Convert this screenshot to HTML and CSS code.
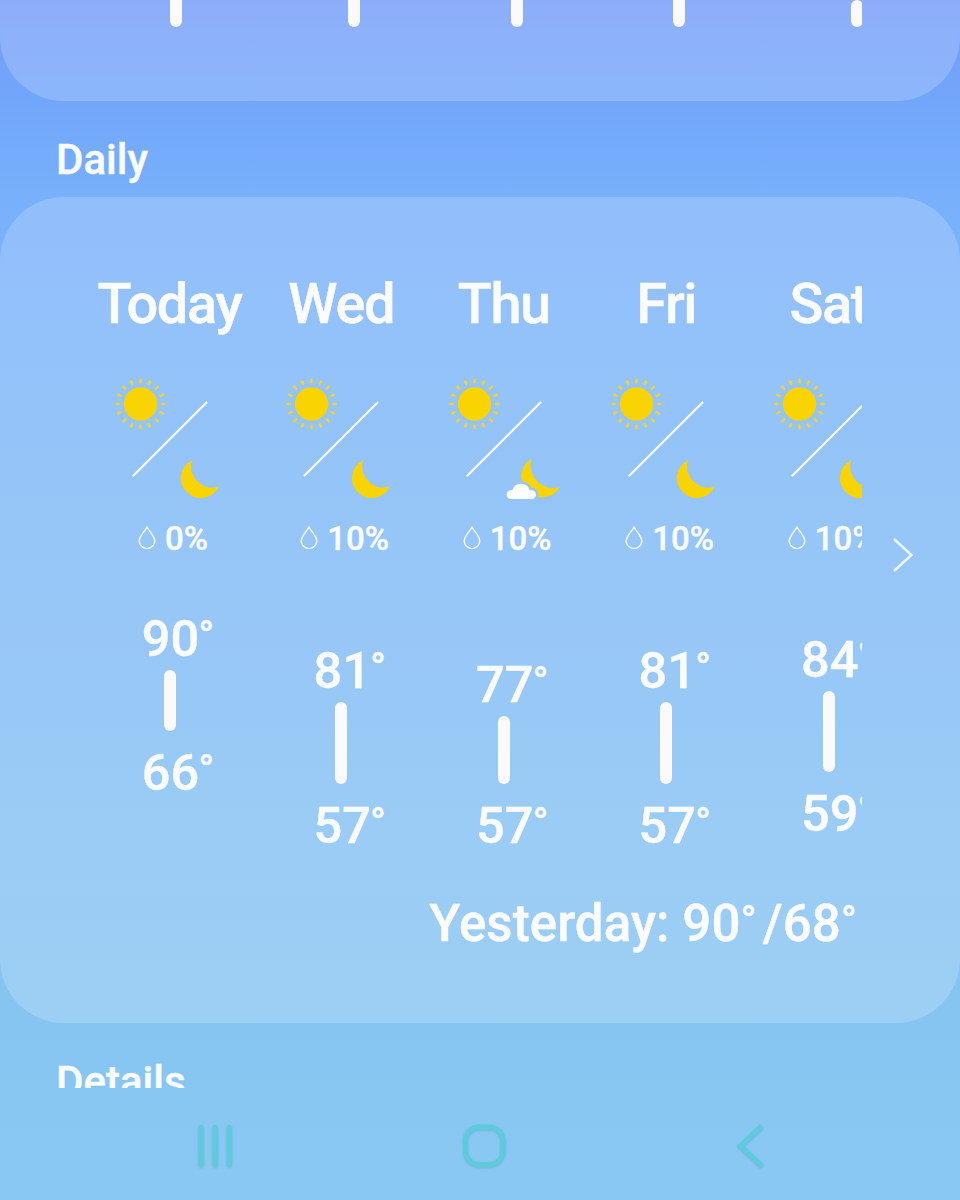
FILE: index.html
```html
<!DOCTYPE html>
<html lang="en">

<head>
  <meta charset="UTF-8" />
  <title>Weather</title>
  <link rel="stylesheet" href="styles.css">
</head>

<body>
  <!-- Shared icons -->
  <svg class="sprite" aria-hidden="true">
    <symbol id="sun-slash" viewBox="0 0 120 130">
      <circle cx="30.5" cy="32" r="16.7" fill="#fad400" />
      <g stroke="#f0d22e" stroke-width="2.7" stroke-linecap="round">
        <g id="rays">
          <path id="ray" d="M30.5 10.2V7.9" />
          <use href="#ray" transform="rotate(22.5 30.5 32)" />
          <use href="#ray" transform="rotate(45 30.5 32)" />
          <use href="#ray" transform="rotate(67.5 30.5 32)" />
        </g>
        <use href="#rays" transform="rotate(90 30.5 32)" />
        <use href="#rays" transform="rotate(180 30.5 32)" />
        <use href="#rays" transform="rotate(270 30.5 32)" />
      </g>
      <path d="M23.5 103.5L96.5 30.5" stroke="#fafcff" stroke-width="2.2" stroke-linecap="round" />
    </symbol>
    <symbol id="clear-night" viewBox="0 0 120 130">
      <use href="#sun-slash" width="120" height="130" />
      <path d="M82 88.300A19.900 19.900 0 1 0 108.800 114.600A21.400 21.400 0 0 1 82 88.300Z" fill="#fad400" />
    </symbol>
    <symbol id="cloudy-night" viewBox="0 0 120 130">
      <mask id="cloud-cut" maskUnits="userSpaceOnUse" x="0" y="0" width="120" height="130">
        <rect width="120" height="130" fill="#fff" />
        <use href="#cloud-shape" fill="#000" stroke="#000" stroke-width="5" />
      </mask>
      <use href="#sun-slash" width="120" height="130" />
      <path d="M87.4 86.8A20.8 20.8 0 1 0 116 115.2A23 23 0 0 1 87.4 86.8Z" fill="#fad400" mask="url(#cloud-cut)" />
      <use href="#cloud-shape" fill="#fff" />
    </symbol>
    <symbol id="drop" viewBox="0 0 18 24">
      <path d="M9 1.2C7 5 1.2 10.3 1.2 15A7.8 7.6 0 0 0 16.8 15C16.8 10.3 11 5 9 1.2Z" fill="none" stroke="#fafcff" stroke-width="1.4" />
    </symbol>
    <defs>
      <path id="cloud-shape" d="M67 127A4.4 4.4 0 0 1 67 118.2H68.4A9 9 0 0 1 85.6 118.2H87.6A4.4 4.4 0 0 1 87.6 127Z" />
    </defs>
  </svg>

  <main class="content">
    <!-- Hourly card -->
    <section class="card hourly">
      <div class="hours">
        <span class="bar"></span>
        <span class="bar"></span>
        <span class="bar"></span>
        <span class="bar"></span>
        <span class="bar"></span>
      </div>
    </section>

    <h2 class="section-title">Daily</h2>

    <!-- Daily card -->
    <section class="card daily">
      <div class="days">
        <div class="day today">
          <div class="day-name">Today</div>
          <svg class="icon"><use href="#clear-night" /></svg>
          <div class="rain"><svg class="drop"><use href="#drop" /></svg>0%</div>
          <div class="range" style="--offset: 0px; --length: 61px">
            <div class="temp">90<span class="deg">°</span></div>
            <span class="bar"></span>
            <div class="temp">66<span class="deg">°</span></div>
          </div>
        </div>
        <div class="day">
          <div class="day-name">Wed</div>
          <svg class="icon"><use href="#clear-night" /></svg>
          <div class="rain"><svg class="drop"><use href="#drop" /></svg>10%</div>
          <div class="range" style="--offset: 32px; --length: 82px">
            <div class="temp">81<span class="deg">°</span></div>
            <span class="bar"></span>
            <div class="temp">57<span class="deg">°</span></div>
          </div>
        </div>
        <div class="day">
          <div class="day-name">Thu</div>
          <svg class="icon"><use href="#cloudy-night" /></svg>
          <div class="rain"><svg class="drop"><use href="#drop" /></svg>10%</div>
          <div class="range" style="--offset: 46px; --length: 68px">
            <div class="temp">77<span class="deg">°</span></div>
            <span class="bar"></span>
            <div class="temp">57<span class="deg">°</span></div>
          </div>
        </div>
        <div class="day">
          <div class="day-name">Fri</div>
          <svg class="icon"><use href="#clear-night" /></svg>
          <div class="rain"><svg class="drop"><use href="#drop" /></svg>10%</div>
          <div class="range" style="--offset: 32px; --length: 82px">
            <div class="temp">81<span class="deg">°</span></div>
            <span class="bar"></span>
            <div class="temp">57<span class="deg">°</span></div>
          </div>
        </div>
        <div class="day">
          <div class="day-name">Sat</div>
          <svg class="icon"><use href="#clear-night" /></svg>
          <div class="rain"><svg class="drop"><use href="#drop" /></svg>10%</div>
          <div class="range" style="--offset: 21px; --length: 81px">
            <div class="temp">84<span class="deg">°</span></div>
            <span class="bar"></span>
            <div class="temp">59<span class="deg">°</span></div>
          </div>
        </div>
      </div>
      <svg class="more" viewBox="0 0 22 36">
        <path d="M2 2L19.5 18L2 34" fill="none" stroke="#edf7ff" stroke-width="2.4" />
      </svg>
      <div class="yesterday">Yesterday: 90<span class="deg">°</span>/68<span class="deg">°</span></div>
    </section>

    <h2 class="section-title">Details</h2>
  </main>

  <!-- System navigation -->
  <nav class="navbar">
    <svg class="nav-icon" viewBox="0 0 48 48">
      <path d="M10 5.5V42.5M24.2 5.5V42.5M38.3 5.5V42.5" />
    </svg>
    <svg class="nav-icon" viewBox="0 0 48 48">
      <rect x="5.5" y="5" width="37.5" height="37.5" rx="13.5" />
    </svg>
    <svg class="nav-icon" viewBox="0 0 48 48">
      <path class="back" d="M35 4L13.5 24L35 44" />
    </svg>
  </nav>
</body>

</html>
```

FILE: styles.css
```css
:root {
  --text-color: #fafcff;
  --bar-color: #fafafa;
  --card-color: rgba(255, 255, 255, 0.19);
  --nav-color: #5ccbdc;
}

* {
  box-sizing: border-box;
}

body {
  margin: 0;
  width: 960px;
  height: 1200px;
  overflow: hidden;
  font-family: Roboto, sans-serif;
  font-weight: 500;
  color: var(--text-color);
  -webkit-text-stroke: 0.4px var(--text-color);
  background: linear-gradient(#739bf9 0, #72a7fa 110px, #78b0fb 195px, #7fbaf5 600px, #86c5f1 1030px, #89c9f1 1200px);
}

.sprite {
  display: block;
  width: 0;
  height: 0;
}

.content {
  height: 1088px;
  overflow: hidden;
}

/* --- Cards --- */
.card {
  background: var(--card-color);
  border-radius: 64px;
}

.bar {
  width: 12px;
  border-radius: 6px;
  background: var(--bar-color);
}

.section-title {
  margin: 0;
  height: 96px;
  padding: 34px 0 0 56px;
  font-size: 42px;
  line-height: 50px;
  font-weight: 500;
}

/* --- Hourly --- */
.hourly {
  height: 101px;
  border-radius: 0 0 64px 64px;
}

.hours {
  display: grid;
  grid-template-columns: 194px 161px 165px 160px 196px;
  justify-items: center;
  width: 783px;
  height: 60px;
  margin-left: 79px;
  overflow: hidden;
}

.hours .bar {
  height: 27px;
  border-radius: 0 0 6px 6px;
}

/* last visible hour starts inside the screen */
.hours .bar:last-child {
  border-radius: 6px;
}

/* --- Daily --- */
.daily {
  display: grid;
  grid-template-columns: 783px 1fr;
  grid-template-rows: 657px 1fr;
  height: 826px;
  padding: 40px 0 0 79px;
}

.days {
  display: flex;
  overflow: hidden;
}

.day {
  flex: none;
  width: 162.5px;
  padding-top: 34px;
  display: flex;
  flex-direction: column;
  align-items: center;
}

.today {
  width: 181px;
}

.day-name {
  font-size: 56px;
  line-height: 66px;
  letter-spacing: -1.4px;
}

.icon {
  width: 120px;
  height: 130px;
  margin-top: 35px;
}

.rain {
  display: flex;
  align-items: center;
  gap: 9px;
  height: 40px;
  margin: 16px 0 0 7px;
  font-size: 33px;
}

.drop {
  width: 18px;
  height: 24px;
}

.range {
  display: flex;
  flex-direction: column;
  align-items: center;
  padding-top: calc(51px + var(--offset));
}

.range .bar {
  height: var(--length);
  margin: 1px 0 12px;
}

.temp {
  height: 60px;
  padding-left: 2px;
  font-size: 50.5px;
  line-height: 60px;
}

.deg {
  font-size: 42px;
  line-height: 1;
  vertical-align: 5px;
}

.temp .deg {
  display: inline-block;
  width: 0;
  margin-left: -1px;
}

.more {
  width: 22px;
  height: 36px;
  margin: 300px 0 0 30px;
}

.yesterday {
  padding-right: 5px;
  font-size: 51px;
  line-height: 60px;
  letter-spacing: 0.1px;
  text-align: right;
}

.yesterday .deg:not(:last-child) {
  margin-right: 6px;
}

/* --- Navigation bar --- */
.navbar {
  display: grid;
  grid-template-columns: 270px 268px 266px;
  place-items: center;
  height: 112px;
  padding: 4px 0 0 80px;
}

.nav-icon {
  width: 48px;
  height: 48px;
  fill: none;
  stroke: var(--nav-color);
  stroke-width: 5;
  stroke-linecap: round;
  filter: drop-shadow(0 1px 1px rgba(70, 120, 170, 0.3));
}

.nav-icon .back {
  stroke-linecap: butt;
}
```
